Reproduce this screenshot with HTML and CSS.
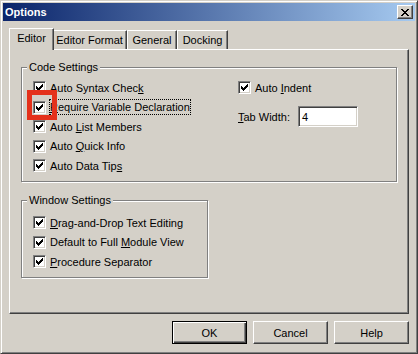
FILE: index.html
```html
<!DOCTYPE html>
<html>
<head>
<meta charset="utf-8">
<link rel="stylesheet" href="styles.css">
</head>
<body>
<div class="window">
  <div class="titlebar">
    <span class="title">Options</span>
    <span class="close"><svg width="8" height="7" viewBox="0 0 8 7"><path d="M0 0h2v1H0zM6 0h2v1H6zM1 1h2v1H1zM5 1h2v1H5zM2 2h4v1H2zM3 3h2v1H3zM2 4h4v1H2zM1 5h2v1H1zM5 5h2v1H5zM0 6h2v1H0zM6 6h2v1H6z" fill="#000"/></svg></span>
  </div>
  <div class="client">
    <div class="tabs">
      <div class="tab tab-editor selected">Editor</div>
      <div class="tab tab-format">Editor Format</div>
      <div class="tab tab-general">General</div>
      <div class="tab tab-docking">Docking</div>
    </div>
    <div class="panel">
      <div class="group group-code">
        <span class="legend">Code Settings</span>
        <div class="col">
          <div class="row"><span class="cb"><svg viewBox="1 1 11 11" width="11" height="11"><path d="M3 5h1v3H3zM4 6h1v3H4zM5 7h1v3H5zM6 6h1v3H6zM7 5h1v3H7zM8 4h1v3H8zM9 3h1v3H9z" fill="#000"/></svg></span><span>Auto Syntax Chec<u>k</u></span></div>
          <div class="row"><span class="cb"><svg viewBox="1 1 11 11" width="11" height="11"><path d="M3 5h1v3H3zM4 6h1v3H4zM5 7h1v3H5zM6 6h1v3H6zM7 5h1v3H7zM8 4h1v3H8zM9 3h1v3H9z" fill="#000"/></svg></span><span class="focus"><u>R</u>equire Variable Declaration</span></div>
          <div class="row"><span class="cb"><svg viewBox="1 1 11 11" width="11" height="11"><path d="M3 5h1v3H3zM4 6h1v3H4zM5 7h1v3H5zM6 6h1v3H6zM7 5h1v3H7zM8 4h1v3H8zM9 3h1v3H9z" fill="#000"/></svg></span><span>Auto <u>L</u>ist Members</span></div>
          <div class="row"><span class="cb"><svg viewBox="1 1 11 11" width="11" height="11"><path d="M3 5h1v3H3zM4 6h1v3H4zM5 7h1v3H5zM6 6h1v3H6zM7 5h1v3H7zM8 4h1v3H8zM9 3h1v3H9z" fill="#000"/></svg></span><span>Auto <u>Q</u>uick Info</span></div>
          <div class="row"><span class="cb"><svg viewBox="1 1 11 11" width="11" height="11"><path d="M3 5h1v3H3zM4 6h1v3H4zM5 7h1v3H5zM6 6h1v3H6zM7 5h1v3H7zM8 4h1v3H8zM9 3h1v3H9z" fill="#000"/></svg></span><span>Auto Data Tip<u>s</u></span></div>
        </div>
        <div class="col">
          <div class="row"><span class="cb"><svg viewBox="1 1 11 11" width="11" height="11"><path d="M3 5h1v3H3zM4 6h1v3H4zM5 7h1v3H5zM6 6h1v3H6zM7 5h1v3H7zM8 4h1v3H8zM9 3h1v3H9z" fill="#000"/></svg></span><span>Auto <u>I</u>ndent</span></div>
          <div class="field"><span class="field-label"><u>T</u>ab Width:</span><span class="input">4</span></div>
        </div>
      </div>
      <div class="group group-window">
        <span class="legend">Window Settings</span>
        <div class="row"><span class="cb"><svg viewBox="1 1 11 11" width="11" height="11"><path d="M3 5h1v3H3zM4 6h1v3H4zM5 7h1v3H5zM6 6h1v3H6zM7 5h1v3H7zM8 4h1v3H8zM9 3h1v3H9z" fill="#000"/></svg></span><span><u>D</u>rag-and-Drop Text Editing</span></div>
        <div class="row"><span class="cb"><svg viewBox="1 1 11 11" width="11" height="11"><path d="M3 5h1v3H3zM4 6h1v3H4zM5 7h1v3H5zM6 6h1v3H6zM7 5h1v3H7zM8 4h1v3H8zM9 3h1v3H9z" fill="#000"/></svg></span><span>Default to Full <u>M</u>odule View</span></div>
        <div class="row"><span class="cb"><svg viewBox="1 1 11 11" width="11" height="11"><path d="M3 5h1v3H3zM4 6h1v3H4zM5 7h1v3H5zM6 6h1v3H6zM7 5h1v3H7zM8 4h1v3H8zM9 3h1v3H9z" fill="#000"/></svg></span><span><u>P</u>rocedure Separator</span></div>
      </div>
    </div>
    <div class="buttons">
      <div class="btn btn-default">OK</div>
      <div class="btn">Cancel</div>
      <div class="btn">Help</div>
    </div>
  </div>
  <div class="highlight"></div>
</div>
</body>
</html>
```
FILE: styles.css
```css
* { box-sizing: border-box; }
html, body { margin: 0; padding: 0; }
body {
  width: 418px;
  height: 354px;
  overflow: hidden;
  background: #d4d0c8;
  font-family: "Liberation Sans", Arial, sans-serif;
  font-size: 11px;
  color: #000;
}
.window {
  position: relative;
  width: 418px;
  height: 354px;
  background: #d4d0c8;
  border: 1px solid;
  border-color: #d4d0c8 #404040 #404040 #d4d0c8;
  box-shadow: inset 1px 1px #fff, inset -1px -1px #808080;
  padding: 2px;
  display: flex;
  flex-direction: column;
}
.titlebar {
  flex: none;
  height: 18px;
  display: flex;
  align-items: center;
  justify-content: space-between;
  padding: 0 2px;
  background: linear-gradient(to right, #0a246a, #a6caf0);
}
.title {
  color: #fff;
  font-weight: bold;
  font-size: 11px;
}
.close {
  width: 16px;
  height: 14px;
  display: flex;
  align-items: center;
  justify-content: center;
  background: #d4d0c8;
  border: 1px solid;
  border-color: #fff #404040 #404040 #fff;
  box-shadow: inset -1px -1px #808080;
}
.close svg { display: block; }
.client {
  flex: 1;
  display: flex;
  flex-direction: column;
  padding: 7px 6px 0 6px;
}
.tabs {
  position: relative;
  z-index: 2;
  height: 21px;
  display: flex;
  align-items: flex-start;
  padding-left: 2px;
}
.tab {
  height: 19px;
  margin-top: 2px;
  padding-top: 2px;
  line-height: 15px;
  text-align: center;
  white-space: nowrap;
  background: #d4d0c8;
  border: 1px solid;
  border-bottom: none;
  border-color: #fff #404040 transparent #fff;
  box-shadow: inset -1px 0 #808080;
}
.tab.selected {
  position: relative;
  z-index: 3;
  height: 22px;
  margin: 0 -2px;
  padding-top: 2px;
}
.tab-editor { width: 41px; }
.tab-editor.selected { width: 45px; }
.tab-format { width: 75px; }
.tab-general { width: 50px; }
.tab-docking { width: 51px; }
.panel {
  width: 400px;
  height: 265px;
  border: 1px solid;
  border-color: #fff #404040 #404040 #fff;
  box-shadow: inset -1px -1px #808080;
  padding: 17px 0 0 11px;
}
.group {
  position: relative;
  border: 1px solid #808080;
  box-shadow: inset 1px 1px #fff, 1px 1px #fff;
}
.legend {
  position: absolute;
  top: -8px;
  left: 5px;
  padding: 0 2px;
  line-height: 14px;
  background: #d4d0c8;
  white-space: nowrap;
}
.group-code {
  width: 376px;
  height: 115px;
  padding: 10px 0 0 11px;
  display: grid;
  grid-template-columns: 205px auto;
  align-items: start;
}
.group-window {
  width: 187px;
  height: 78px;
  margin-top: 18px;
  padding: 12px 0 0 11px;
}
.row {
  height: 19.5px;
  display: flex;
  align-items: center;
  gap: 4px;
  white-space: nowrap;
}
.cb {
  flex: none;
  width: 13px;
  height: 13px;
  background: #fff;
  border: 1px solid;
  border-color: #808080 #fff #fff #808080;
  box-shadow: inset 1px 1px #404040, inset -1px -1px #d4d0c8;
}
.cb svg { display: block; }
.focus {
  margin-left: -1px;
  border: 1px dotted #000;
  line-height: 14px;
}
.field {
  display: flex;
  align-items: center;
  margin-top: 8.5px;
}
.field-label {
  width: 60px;
  white-space: nowrap;
}
.input {
  width: 60px;
  height: 21px;
  padding-left: 3px;
  display: flex;
  align-items: center;
  background: #fff;
  border: 1px solid;
  border-color: #808080 #fff #fff #808080;
  box-shadow: inset 1px 1px #404040, inset -1px -1px #d4d0c8;
}
.buttons {
  display: flex;
  justify-content: flex-end;
  gap: 6px;
  margin-top: 7px;
}
.btn {
  width: 75px;
  height: 23px;
  display: flex;
  align-items: center;
  justify-content: center;
  border: 1px solid;
  border-color: #fff #404040 #404040 #fff;
  box-shadow: inset -1px -1px #808080;
}
.btn-default {
  border-color: #000;
  box-shadow: inset 1px 1px #fff, inset -1px -1px #404040, inset -2px -2px #808080;
}
.highlight {
  position: absolute;
  left: 26px;
  top: 89px;
  width: 30px;
  height: 30px;
  border: 5px solid #e4311b;
}
```
